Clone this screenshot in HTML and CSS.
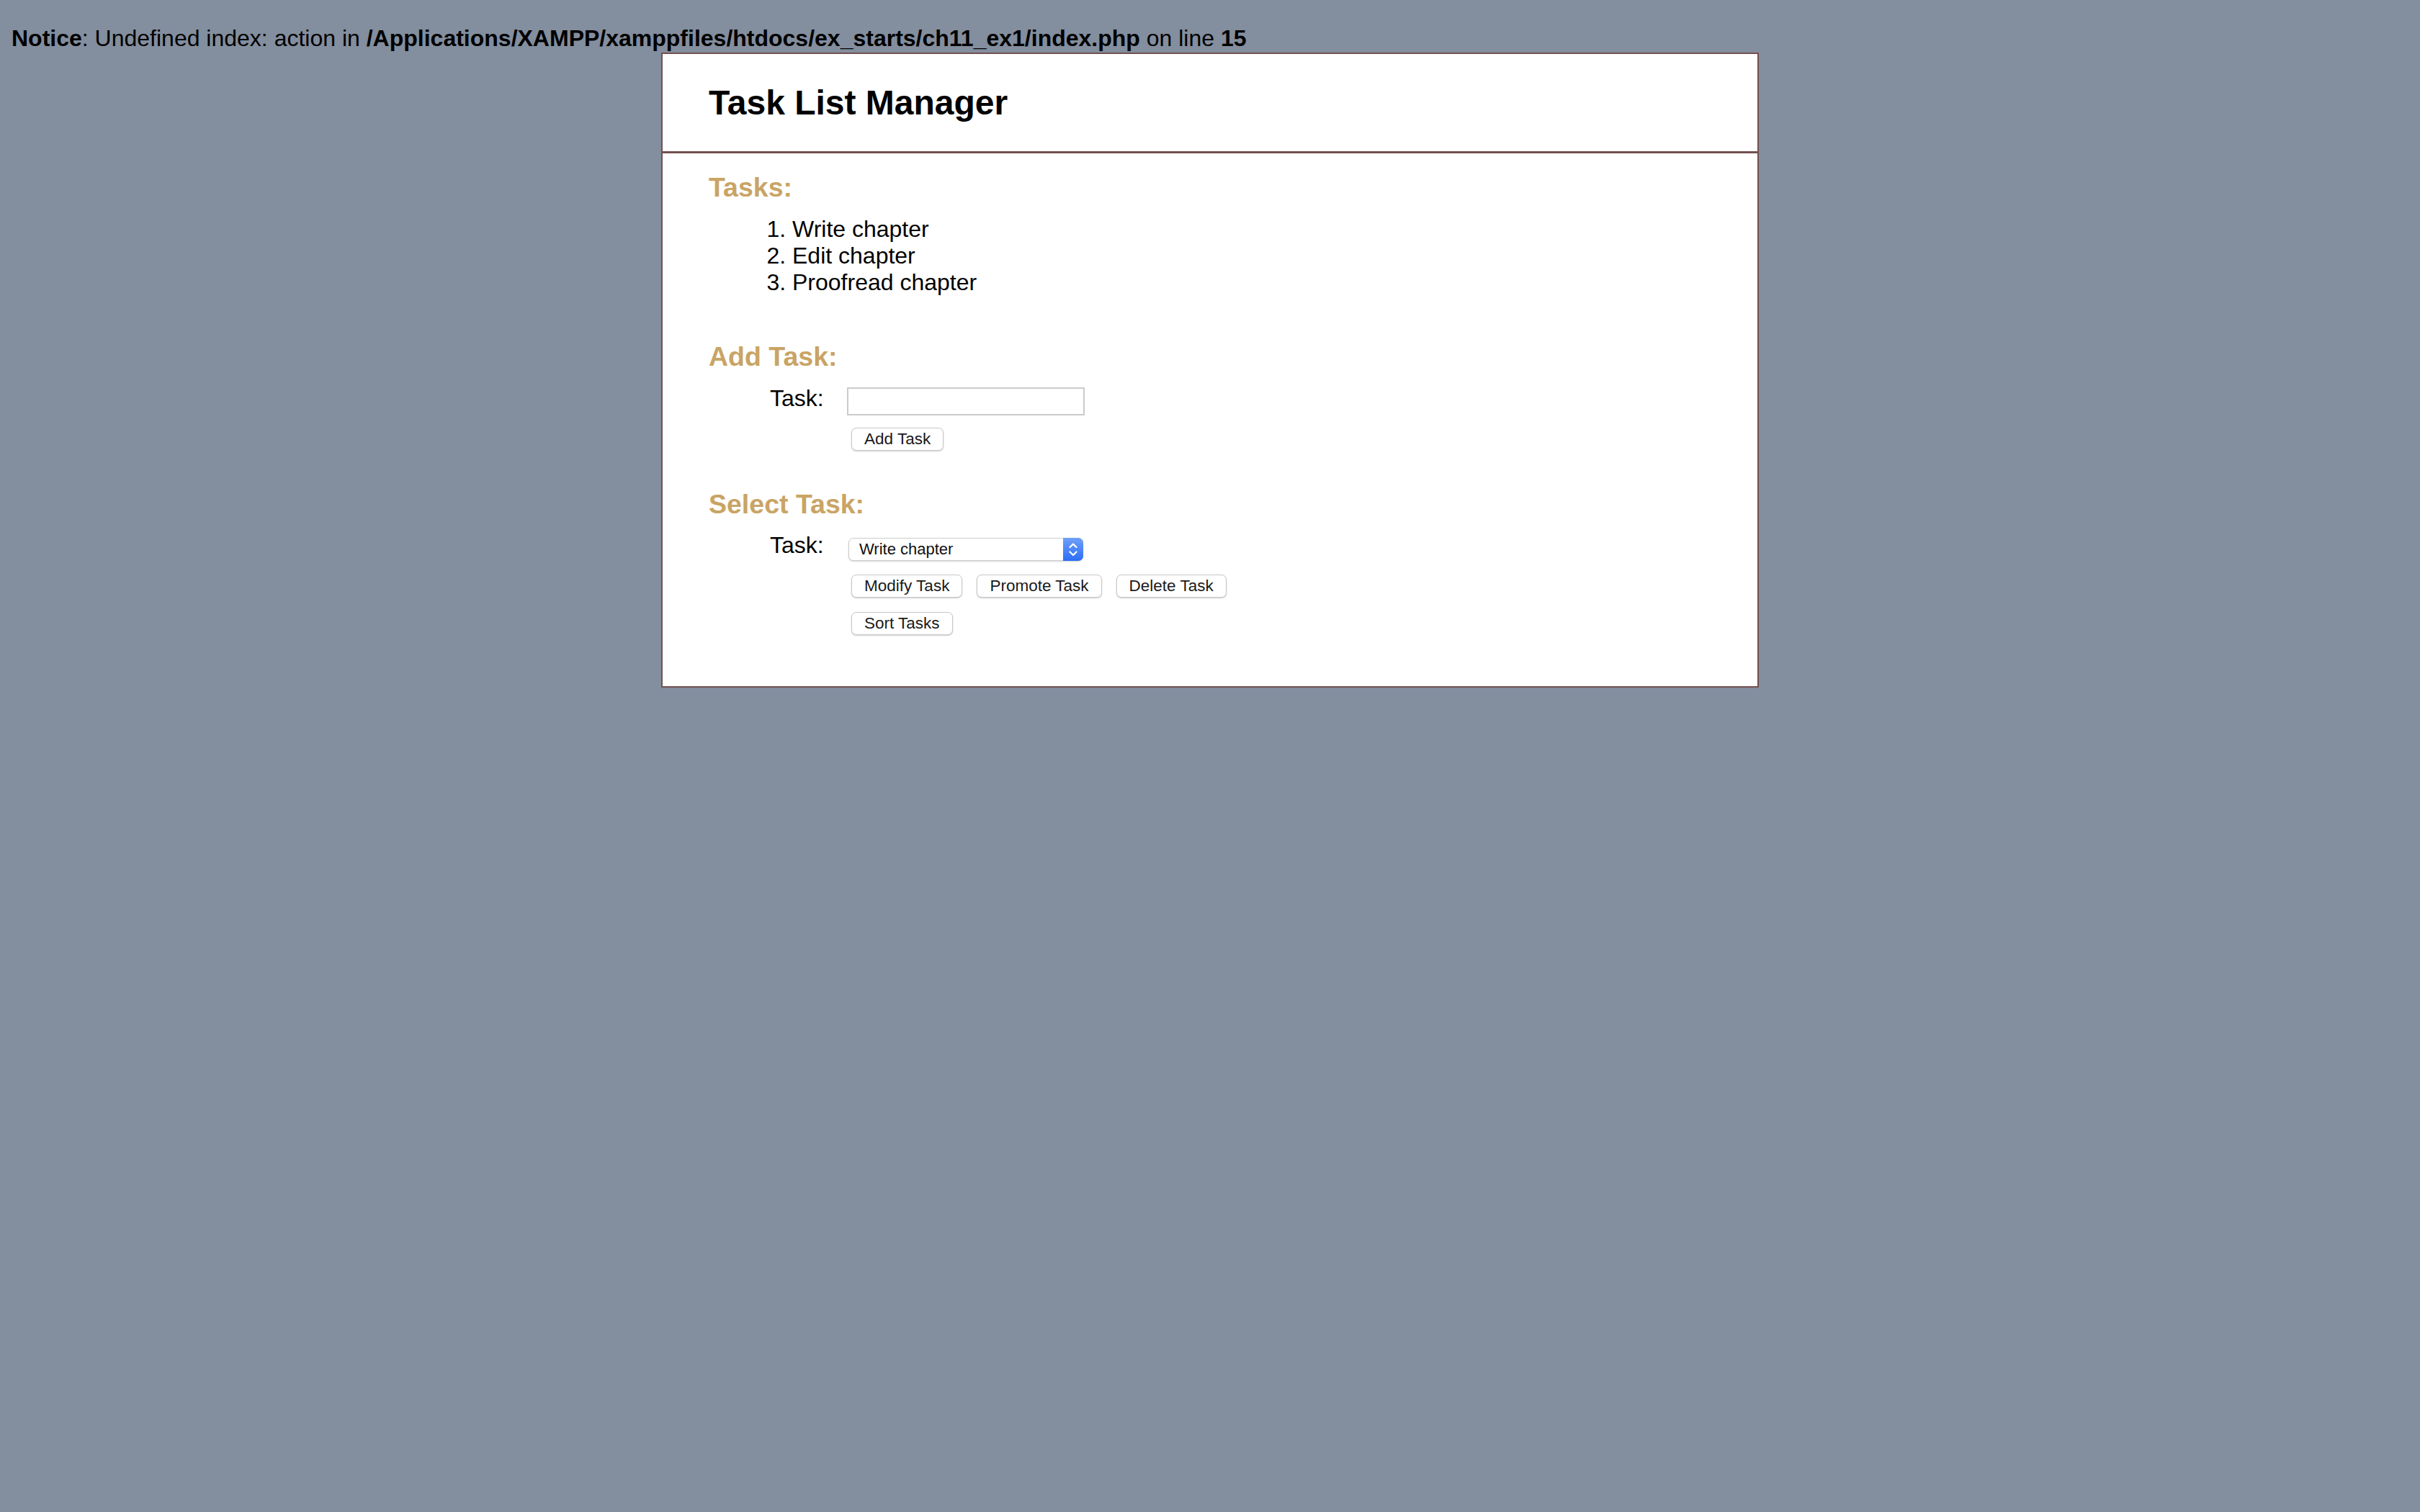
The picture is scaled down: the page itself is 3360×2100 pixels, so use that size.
FILE: index.html
```html
<!DOCTYPE html>
<html lang="en">
<head>
<meta charset="utf-8">
<title>Task List Manager</title>
<link rel="stylesheet" href="styles.css">
</head>
<body>
<p class="notice"><b>Notice</b>: Undefined index: action in <b>/Applications/XAMPP/xamppfiles/htdocs/ex_starts/ch11_ex1/index.php</b> on line <b>15</b></p>
<div class="page">
  <header class="page-header">
    <h1>Task List Manager</h1>
  </header>
  <main class="page-main">
    <section class="section section-tasks">
      <h2>Tasks:</h2>
      <ol class="task-list">
        <li>Write chapter</li>
        <li>Edit chapter</li>
        <li>Proofread chapter</li>
      </ol>
    </section>
    <section class="section section-add">
      <h2>Add Task:</h2>
      <form class="task-form">
        <div class="field">
          <label class="field-label" for="newtask">Task:</label>
          <input class="text-input" type="text" id="newtask" name="newtask">
        </div>
        <div class="button-row">
          <button type="button" class="btn">Add Task</button>
        </div>
      </form>
    </section>
    <section class="section section-select">
      <h2>Select Task:</h2>
      <form class="task-form">
        <div class="field field-select">
          <label class="field-label" for="taskid">Task:</label>
          <div class="select-wrap">
            <select class="select" id="taskid" name="taskid">
              <option>Write chapter</option>
              <option>Edit chapter</option>
              <option>Proofread chapter</option>
            </select>
            <span class="select-arrows" aria-hidden="true">
              <svg width="28" height="32" viewBox="0 0 28 32">
                <polyline points="9.5,13 14,8.5 18.5,13" fill="none" stroke="#fff" stroke-width="2.2" stroke-linecap="round" stroke-linejoin="round"/>
                <polyline points="9.5,19.5 14,24 18.5,19.5" fill="none" stroke="#fff" stroke-width="2.2" stroke-linecap="round" stroke-linejoin="round"/>
              </svg>
            </span>
          </div>
        </div>
        <div class="button-row button-row-first">
          <button type="button" class="btn">Modify Task</button>
          <button type="button" class="btn">Promote Task</button>
          <button type="button" class="btn">Delete Task</button>
        </div>
        <div class="button-row button-row-second">
          <button type="button" class="btn">Sort Tasks</button>
        </div>
      </form>
    </section>
  </main>
</div>
</body>
</html>
```

FILE: styles.css
```css
html {
  background: #838e9e;
}

body {
  margin: 0;
  padding: 0;
  min-height: 2100px;
  background: #838e9e;
  color: #000;
  font-family: "Liberation Sans", Arial, Helvetica, sans-serif;
}

.notice {
  margin: 0;
  padding: 35px 16px 0;
  font-size: 32px;
  line-height: 37px;
  white-space: nowrap;
}

.page {
  width: 1520px;
  margin: 1px auto 0;
  background: #fff;
  border: 2px solid #735050;
}

.page-header {
  padding: 40px 64px 40px;
  border-bottom: 3px solid #735050;
}

.page-header h1 {
  margin: 0;
  font-size: 48px;
  line-height: 55px;
  font-weight: bold;
}

.page-main {
  padding: 27px 64px 71px;
}

.section h2 {
  margin: 0;
  font-size: 37.5px;
  line-height: 41px;
  font-weight: bold;
  color: #c9a465;
}

.section-add {
  margin-top: 64px;
}

.section-select {
  margin-top: 54px;
}

.task-list {
  margin: 19px 0 0;
  padding-left: 116px;
  font-size: 32px;
  line-height: 37px;
}

.task-form {
  margin: 0;
}

.field {
  display: flex;
  align-items: flex-start;
  margin-top: 19px;
  padding-left: 85px;
}

.field-select {
  margin-top: 18px;
}

.field-label {
  width: 107px;
  flex: none;
  font-size: 32px;
  line-height: 37px;
}

.text-input {
  box-sizing: border-box;
  width: 330px;
  height: 39px;
  margin: 3px 0 0;
  padding: 0 8px;
  border: 2px solid #cbcbcb;
  border-radius: 0;
  background: #fff;
  font-family: "Liberation Sans", Arial, sans-serif;
  font-size: 22px;
  outline: none;
}

.select-wrap {
  position: relative;
  width: 326px;
  height: 32px;
  margin: 8px 0 0 2px;
}

.select {
  box-sizing: border-box;
  width: 326px;
  height: 32px;
  margin: 0;
  padding: 0 0 0 14px;
  border: 1px solid #cdcdcd;
  border-radius: 7px;
  background: #fff;
  box-shadow: 0 1px 2px rgba(0, 0, 0, 0.18);
  -webkit-appearance: none;
  appearance: none;
  color: #111;
  font-family: "Liberation Sans", Arial, sans-serif;
  font-size: 22px;
  line-height: 30px;
}

.select-arrows {
  position: absolute;
  top: 0;
  right: 0;
  width: 28px;
  height: 32px;
  border-radius: 0 7px 7px 0;
  background: linear-gradient(#70a0f9, #2c6df6);
  display: flex;
  align-items: center;
  justify-content: center;
}

.select-arrows svg {
  display: block;
}

.button-row {
  display: flex;
  gap: 20px;
  margin-top: 17px;
  padding-left: 198px;
}

.section-select .button-row-first {
  margin-top: 19px;
}

.section-select .button-row-second {
  margin-top: 20px;
}

.btn {
  box-sizing: border-box;
  height: 32px;
  margin: 0;
  padding: 0 17px;
  border: 1px solid #c8c8c8;
  border-radius: 7px;
  background: #fff;
  box-shadow: 0 1px 2px rgba(0, 0, 0, 0.2);
  color: #1a1a1a;
  font-family: "Liberation Sans", Arial, sans-serif;
  font-size: 22.5px;
  line-height: 30px;
  white-space: nowrap;
  cursor: default;
}
```
